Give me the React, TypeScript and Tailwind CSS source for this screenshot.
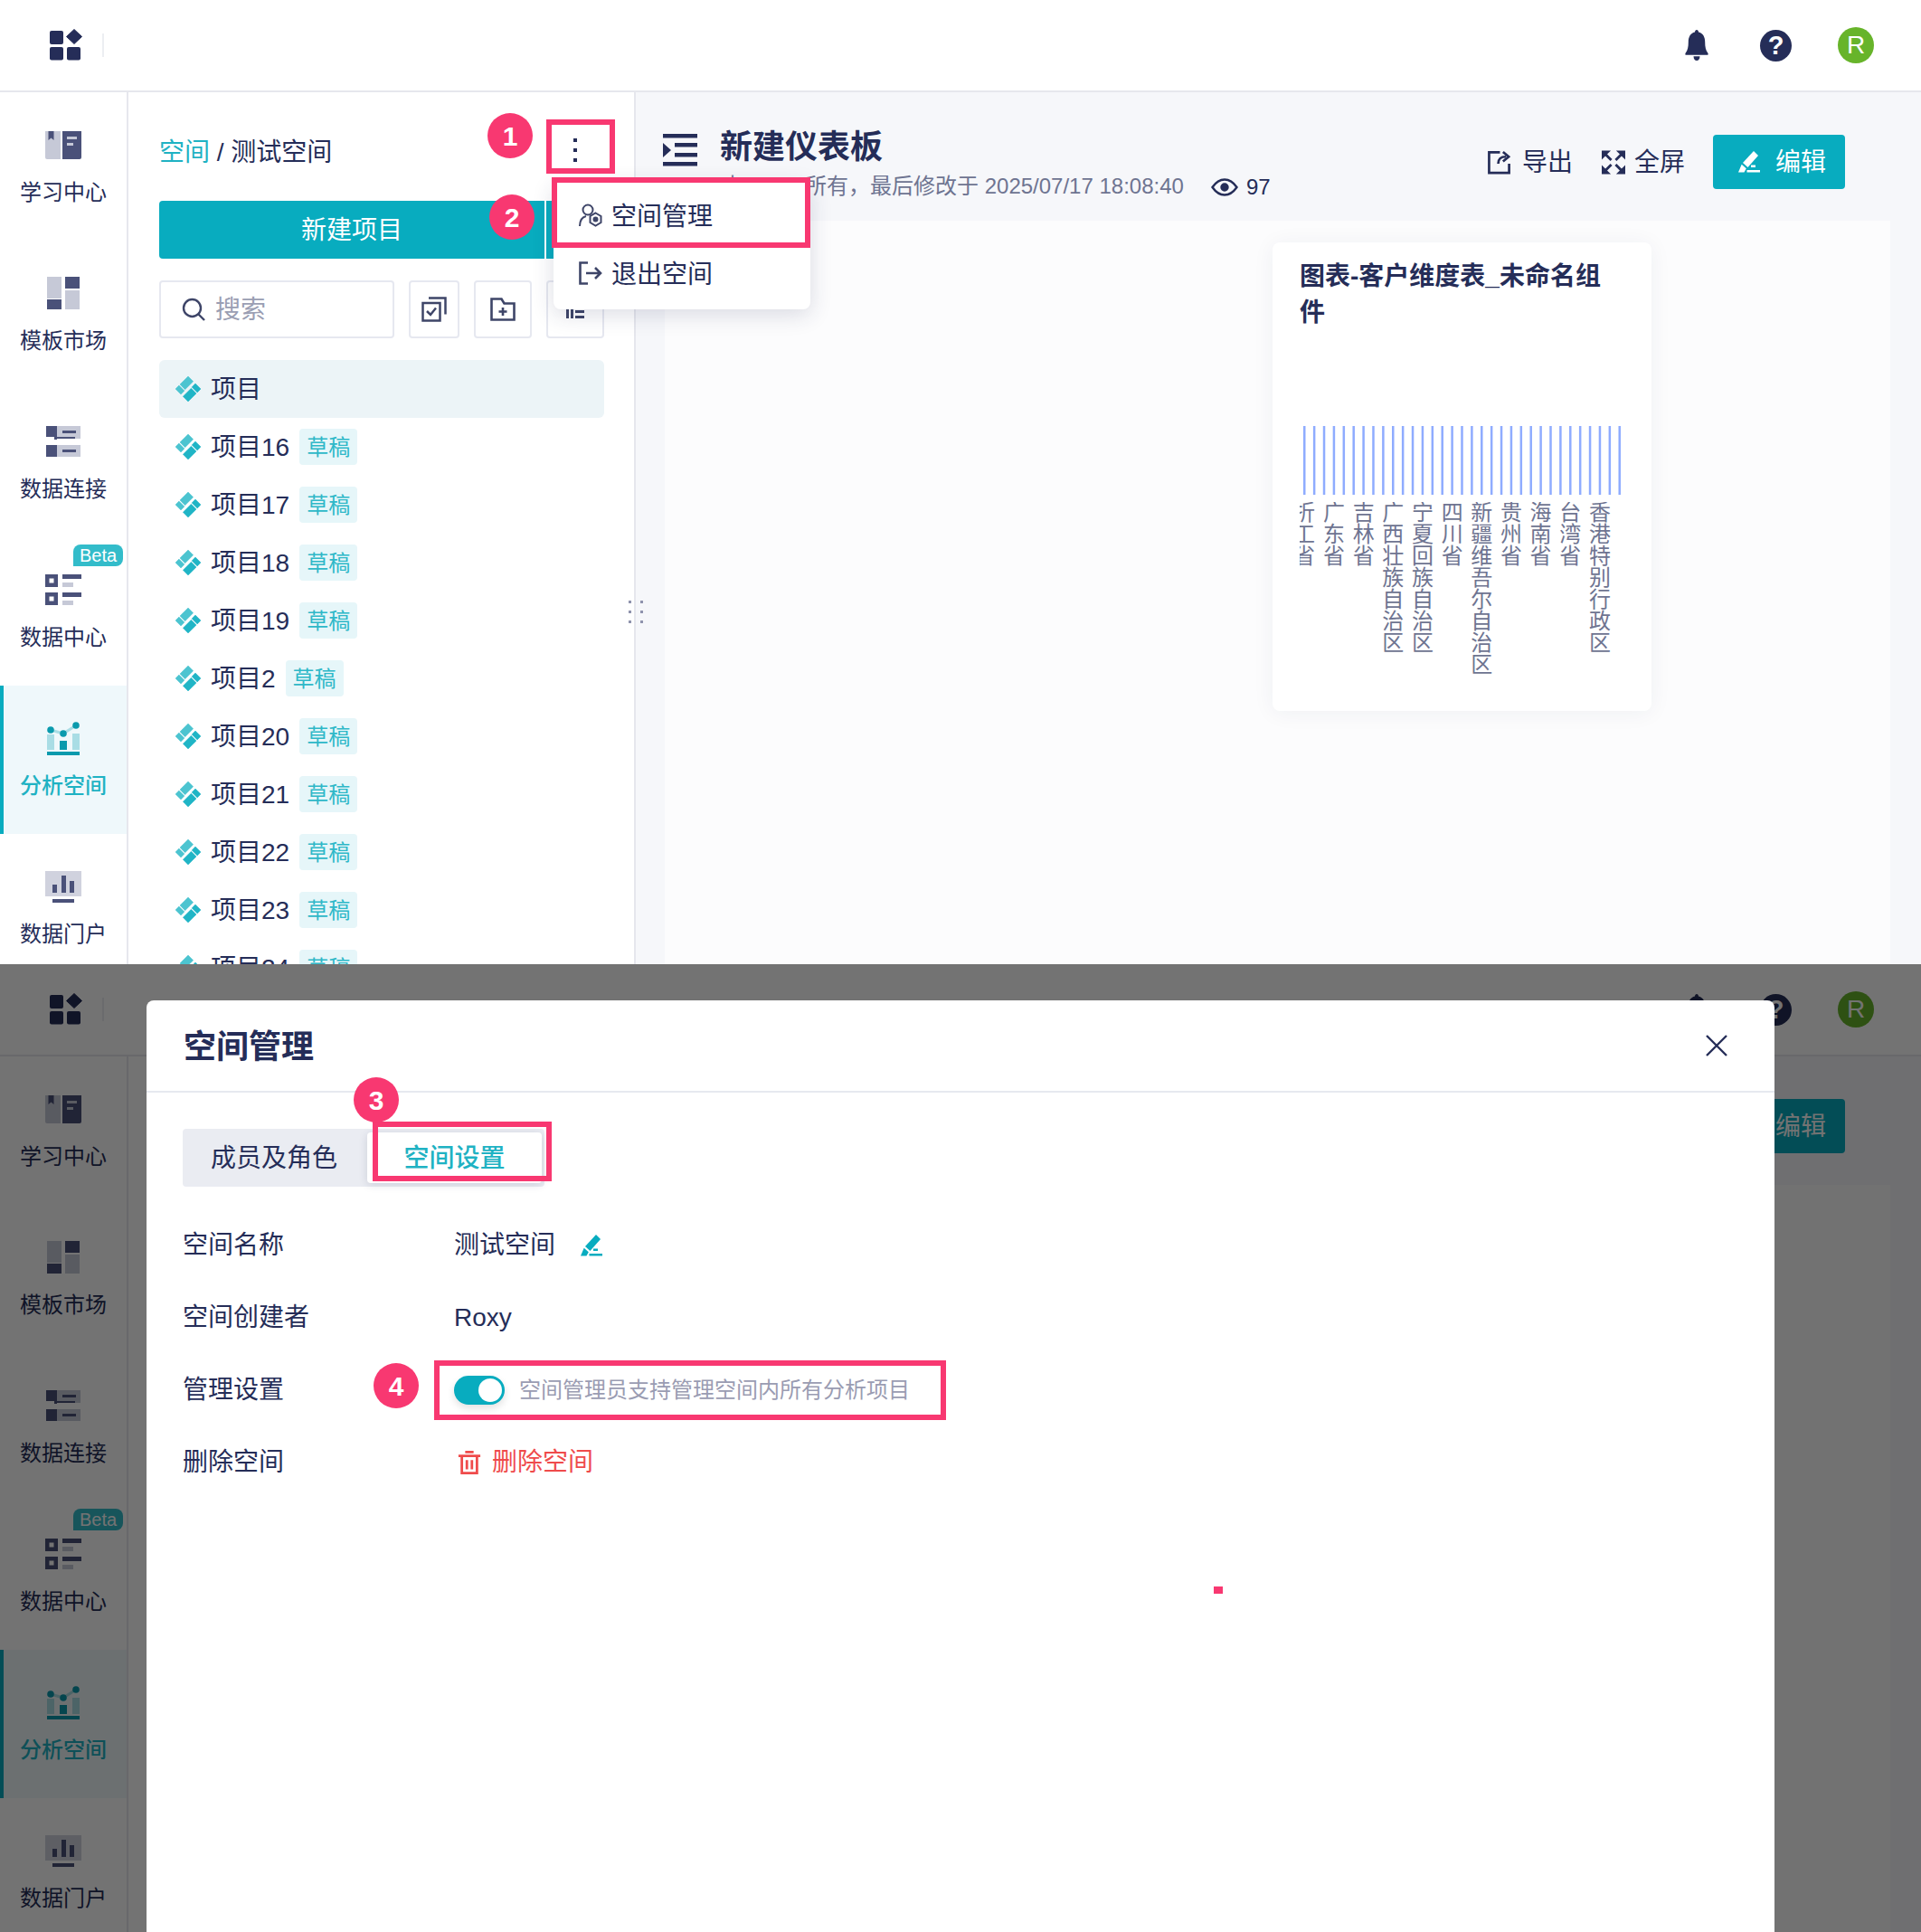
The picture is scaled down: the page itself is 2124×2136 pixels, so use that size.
import React from "react";

const FONT = "font-['Liberation_Sans','Noto_Sans_CJK_SC',sans-serif]";
const NAVY = "#252d58";

function Logo() {
  return (
    <svg width="38" height="36" viewBox="0 0 38 36">
      <rect x="1" y="2" width="15" height="15" rx="2" fill={NAVY} />
      <path d="M28 0.500 L36.500 8.500 L28 16.500 L19.500 8.500 Z" fill={NAVY} stroke={NAVY} strokeLinejoin="round" strokeWidth="1" />
      <rect x="1" y="20" width="15" height="14.500" rx="2" fill={NAVY} />
      <rect x="20" y="20" width="15" height="14.500" rx="2" fill={NAVY} />
    </svg>
  );
}

function Bell() {
  return (
    <svg width="28" height="34" viewBox="0 0 32 36" preserveAspectRatio="none">
      <path d="M16 0c1.400 0 2.200 1 2.300 2.600C24 3.800 26.500 8.500 26.500 14c0 6 1 10 3.500 13 1 1.300.5 2.500-1 2.500H3c-1.500 0-2-1.200-1-2.500 2.500-3 3.500-7 3.500-13 0-5.500 2.500-10.200 8.200-11.400C13.800 1 14.600 0 16 0z" fill={NAVY} />
      <path d="M12 31h8c0 3-1.800 5-4 5s-4-2-4-5z" fill={NAVY} />
    </svg>
  );
}

function Help() {
  return (
    <div className="w-[35px] h-[35px] rounded-full bg-[#252d58] flex items-center justify-center text-white text-[29px] font-bold leading-none">?</div>
  );
}

function BookIcon() {
  return (
    <svg width="40" height="32" viewBox="0 0 40 32">
      <path d="M0 1h17v31H2a2 2 0 0 1-2-2z" fill="#c6c9d7" />
      <path d="M3.500 1h6v10l-3-2.500-3 2.500z" fill="#4a5179" />
      <path d="M19 1h21v29a2 2 0 0 1-2 2H19z" fill="#4a5179" />
      <rect x="24" y="7" width="11" height="3" fill="#c6c9d7" />
      <rect x="24" y="14" width="7" height="3" fill="#c6c9d7" />
    </svg>
  );
}

function TemplateIcon() {
  return (
    <svg width="36" height="36" viewBox="0 0 36 36">
      <rect x="0" y="0" width="16" height="24" fill="#c6c9d7" />
      <rect x="20" y="0" width="16" height="13" fill="#4a5179" />
      <rect x="0" y="25" width="16" height="11" fill="#4a5179" />
      <rect x="20" y="15" width="16" height="21" fill="#c6c9d7" />
    </svg>
  );
}

function ConnectIcon() {
  return (
    <svg width="38" height="34" viewBox="0 0 38 34">
      <rect x="12" y="0" width="26" height="14" fill="#c6c9d7" />
      <rect x="0" y="21" width="38" height="13" fill="#c6c9d7" />
      <path d="M0 0h12v12h20v7H22v-4H9v-3H0z" fill="#4a5179" />
      <rect x="12" y="14" width="20" height="5" fill="#fff" />
      <rect x="0" y="21" width="12" height="13" fill="#4a5179" />
      <rect x="18" y="5" width="15" height="3" fill="#4a5179" />
      <rect x="18" y="26" width="15" height="3" fill="#4a5179" />
    </svg>
  );
}

function DataCenterIcon() {
  return (
    <svg width="40" height="34" viewBox="0 0 40 34">
      <path fillRule="evenodd" d="M0 0h14v14H0zM4.500 4.500v5h5v-5z" fill="#4a5179" />
      <path fillRule="evenodd" d="M0 20h14v14H0zM4.500 24.500v5h5v-5z" fill="#4a5179" />
      <rect x="19" y="0" width="21" height="5" fill="#4a5179" />
      <rect x="19" y="9" width="12" height="5" fill="#c6c9d7" />
      <rect x="19" y="20" width="21" height="5" fill="#4a5179" />
      <rect x="19" y="29" width="12" height="5" fill="#c6c9d7" />
    </svg>
  );
}

function AnalysisIcon() {
  return (
    <svg width="38" height="37" viewBox="0 0 38 37">
      <rect x="1" y="14" width="8" height="17" fill="#a9dde5" />
      <rect x="15" y="21" width="8" height="10" fill="#0a9aad" />
      <rect x="29" y="13" width="8" height="18" fill="#a9dde5" />
      <path d="M5 9 L19 13 L33 4" stroke="#a9dde5" strokeWidth="3" fill="none" />
      <circle cx="5" cy="9" r="3.800" fill="#0a9aad" />
      <circle cx="19" cy="13" r="3.800" fill="#0a9aad" />
      <circle cx="33" cy="4" r="3.800" fill="#0a9aad" />
      <rect x="1" y="33" width="36" height="4" fill="#0a9aad" />
    </svg>
  );
}

function PortalIcon() {
  return (
    <svg width="40" height="35" viewBox="0 0 40 35">
      <rect x="0" y="0" width="40" height="28" fill="#d0d2de" />
      <rect x="8" y="15" width="5" height="9" fill="#4a5179" />
      <rect x="18" y="5" width="5" height="19" fill="#4a5179" />
      <rect x="27" y="11" width="5" height="13" fill="#4a5179" />
      <rect x="8" y="31" width="24" height="4" fill="#4a5179" />
    </svg>
  );
}

function Dia() {
  return (
    <svg width="28" height="28" viewBox="0 0 28 28" className="shrink-0" strokeLinejoin="round" strokeWidth="0.500">
      <path d="M4.950 9.050 L14 0 L19.660 5.660 L10.600 14.700 Z" fill="#4cc4d0" stroke="#4cc4d0" />
      <path d="M0 14 L3.900 10.100 L9.900 16.100 L6 20 Z" fill="#4cc4d0" stroke="#4cc4d0" />
      <path d="M23.050 18.950 L14 28 L8.340 22.340 L17.400 13.300 Z" fill="#20b5c6" stroke="#20b5c6" />
      <path d="M28 14 L24.100 17.900 L18.100 11.900 L22 8 Z" fill="#20b5c6" stroke="#20b5c6" />
    </svg>
  );
}

function PenIcon({ color, w = 24 }: { color: string; w?: number }) {
  return (
    <svg width={w} height={w} viewBox="0 0 24 24">
      <path d="M17 0 L22 5 L10.500 18 L5 13 Z" fill={color} />
      <path d="M3.700 14.700 L8.800 19.300 L6.500 23.500 H0 Z" fill={color} />
      <rect x="14" y="15.500" width="5" height="2.500" fill={color} />
      <rect x="9.500" y="21" width="14.500" height="2.500" fill={color} />
    </svg>
  );
}

function NavItem({ icon, label, active, beta }: { icon: React.ReactNode; label: string; active?: boolean; beta?: boolean }) {
  return (
    <div className={active ? "relative h-[164px] flex flex-col items-center pt-[38px] bg-[#eff8fb] border-l-4 border-[#08acbf] pr-1" : "relative h-[164px] flex flex-col items-center pt-[38px]"}>
      {beta && (
        <div className="absolute left-[81px] top-[8px] w-[55px] h-6 rounded-lg rounded-bl-none bg-[#33bcca] text-white text-[20px] leading-6 text-center">Beta</div>
      )}
      <div className="h-10 flex items-center justify-center">{icon}</div>
      <div className={active ? "mt-[15px] text-[24px] leading-9 font-medium text-[#1fb2c3]" : "mt-[15px] text-[24px] leading-9 text-[#252d58]"}>{label}</div>
    </div>
  );
}

function Row({ label, draft = true, active }: { label: string; draft?: boolean; active?: boolean }) {
  return (
    <div className={active ? "h-16 shrink-0 flex items-center pl-[18px] rounded-md bg-[#ecf4f7]" : "h-16 shrink-0 flex items-center pl-[18px]"}>
      <Dia />
      <span className="ml-[11px] pt-0.5 text-[28px] leading-10 text-[#252d58]">{label}</span>
      {draft && <span className="ml-[11px] w-16 h-10 rounded bg-[#e6f6f9] text-[#2eb8c8] text-[24px] leading-[42px] text-center">草稿</span>}
    </div>
  );
}

const LABELS = ["折工省", "广东省", "吉林省", "广西壮族自治区", "宁夏回族自治区", "四川省", "新疆维吾尔自治区", "贵州省", "海南省", "台湾省", "香港特别行政区"];

function Bars() {
  const xs = Array.from({ length: 33 }, (_, i) => 1.25 + i * 10.89);
  return (
    <svg width="354" height="76" viewBox="0 0 354 76" className="block">
      {xs.map((x) => (
        <rect key={x} x={x - 1.25} y="0" width="2.500" height="76" fill="#8facff" />
      ))}
    </svg>
  );
}

function Screen({ dim }: { dim?: boolean }) {
  return (
    <div className={dim ? "relative h-[1070px] overflow-hidden bg-white" : "relative h-[1066px] overflow-hidden bg-white"}>
      <header className="h-[102px] border-b-2 border-[#e6e7ed] flex items-center justify-between pl-[54px] pr-[52px]">
        <div className="flex items-center">
          <Logo />
          <div className="ml-[21px] w-0.5 h-[26px] bg-[#eceef2]" />
        </div>
        <div className="flex items-center">
          <Bell />
          <div className="ml-[56px]"><Help /></div>
          <div className="ml-[51px] w-10 h-10 rounded-full bg-[#67b42a] flex items-center justify-center text-white text-[28px]">R</div>
        </div>
      </header>
      <div className="flex">
        <aside className="w-[142px] shrink-0 border-r-2 border-[#e6e7ed]">
          <NavItem icon={<BookIcon />} label="学习中心" />
          <NavItem icon={<TemplateIcon />} label="模板市场" />
          <NavItem icon={<ConnectIcon />} label="数据连接" />
          <NavItem icon={<DataCenterIcon />} label="数据中心" beta />
          <NavItem icon={<AnalysisIcon />} label="分析空间" active />
          <NavItem icon={<PortalIcon />} label="数据门户" />
        </aside>
        <section className="relative w-[561px] shrink-0 h-[1000px] border-r-2 border-[#e6e7ed] pl-[34px] pr-[33px]">
          {!dim && (
            <>
              <div className="h-[120px] pt-2 flex items-center justify-between">
                <div className="pt-[5px] text-[28px] text-[#252d58] leading-10">
                  <span className="text-[#1fb2c3]">空间</span> / 测试空间
                </div>
                <div className="flex flex-col gap-[7px] mr-[30px]">
                  <span className="w-1 h-1 bg-[#252d58]" />
                  <span className="w-1 h-1 bg-[#252d58]" />
                  <span className="w-1 h-1 bg-[#252d58]" />
                </div>
              </div>
              <div className="flex gap-0.5">
                <button className="w-[426px] h-16 pt-0.5 rounded-l bg-[#08acbf] text-white text-[28px]">新建项目</button>
                <div className="flex-1 h-16 rounded-r bg-[#08acbf]" />
              </div>
              <div className="mt-6 flex">
                <div className="w-[260px] h-16 border-2 border-[#e6e8f0] rounded flex items-center pl-[22px]">
                  <svg width="28" height="28" viewBox="0 0 28 28" fill="none" stroke="#3e4568" strokeWidth="2.400">
                    <circle cx="12.500" cy="12.500" r="9.500" />
                    <path d="M19.500 19.500 L26 26" />
                  </svg>
                  <span className="ml-[10px] pt-0.5 text-[28px] text-[#9a9eb3]">搜索</span>
                </div>
                <div className="ml-4 w-[56px] h-16 border-2 border-[#e6e8f0] rounded flex items-center justify-center">
                  <svg width="28" height="28" viewBox="0 0 28 28" fill="none" stroke="#3e4568" strokeWidth="2.500">
                    <rect x="1.500" y="7" width="19" height="19.500" />
                    <path d="M8 1.500h18.500v18" />
                    <path d="M6 16l4 4 6-7.500" />
                  </svg>
                </div>
                <div className="ml-4 w-16 h-16 border-2 border-[#e6e8f0] rounded flex items-center justify-center">
                  <svg width="28" height="26" viewBox="0 0 28 26" fill="none" stroke="#3e4568" strokeWidth="2.600">
                    <path d="M1.500 1.500h11l3 5h11v18h-25z" />
                    <path d="M14 11v9M9.500 15.500h9" />
                  </svg>
                </div>
                <div className="ml-4 w-16 h-16 border-2 border-[#e6e8f0] rounded flex items-center justify-center">
                  <svg width="20" height="20" viewBox="0 0 20 20" fill="#3e4568">
                    <rect x="0" y="8" width="3" height="12" />
                    <rect x="5" y="0" width="3" height="20" />
                    <rect x="10" y="11" width="10" height="3" />
                    <rect x="10" y="17" width="10" height="3" />
                  </svg>
                </div>
              </div>
              <div className="mt-6 flex flex-col">
                <Row label="项目" draft={false} active />
                <Row label="项目16" />
                <Row label="项目17" />
                <Row label="项目18" />
                <Row label="项目19" />
                <Row label="项目2" />
                <Row label="项目20" />
                <Row label="项目21" />
                <Row label="项目22" />
                <Row label="项目23" />
                <Row label="项目24" />
              </div>
              <div className="absolute right-[-10px] top-[562px] grid grid-cols-2 gap-x-[10px] gap-y-2">
                {[0, 1, 2, 3, 4, 5].map((i) => (
                  <span key={i} className="w-[3px] h-[3px] bg-[#8f93ad]" />
                ))}
              </div>
            </>
          )}
        </section>
        <main className="flex-1 min-w-0 bg-[#f6f7fa] h-[1000px] pl-[32px] pr-[34px]">
          <div className="h-[142px] flex items-center">
            {!dim && (
              <>
                <svg width="38" height="36" viewBox="0 0 38 36" className="mt-[-15px] ml-[-2px]" fill={NAVY}>
                  <rect x="0" y="0" width="38" height="4.500" />
                  <rect x="13" y="10" width="25" height="4.500" />
                  <rect x="13" y="21" width="25" height="4.500" />
                  <rect x="0" y="31" width="38" height="4.500" />
                  <path d="M0 10 L9 18 L0 26 Z" />
                </svg>
                <div className="ml-[25px] mt-[14px]">
                  <div className="mt-[2px] text-[36px] leading-[46px] font-semibold text-[#252d58]">新建仪表板</div>
                  <div className="mt-1 flex items-center text-[24px] leading-8 text-[#6e7491]">
                    <span className="ml-[2px]">由 Roxy 所有，最后修改于 2025/07/17 18:08:40</span>
                    <svg width="30" height="20" viewBox="0 0 30 20" className="ml-[30px] mt-px" fill="none" stroke="#252d58" strokeWidth="2.400">
                      <path d="M1.500 10C6 3.500 10 1.500 15 1.500s9 2 13.500 8.500C24 16.500 20 18.500 15 18.500S6 16.500 1.500 10z" />
                      <circle cx="15" cy="10" r="3.500" fill="#252d58" />
                    </svg>
                    <span className="ml-[9px] mt-px text-[#252d58]">97</span>
                  </div>
                </div>
              </>
            )}
            <div className="ml-auto mr-[50px] flex items-center text-[28px] text-[#252d58] mt-[12px]">
              <svg width="26" height="27" viewBox="0 0 27 27" fill="none" stroke={NAVY} strokeWidth="2.800">
                <path d="M14 2H1.500v23.500h23V15" />
                <path d="M12 15c0-6 3-8 9-8" />
                <path d="M17.500 1.500L24 7l-6.500 5.500" />
              </svg>
              <span className="ml-3 pt-0.5">导出</span>
              <svg width="26" height="27" viewBox="0 0 27 27" className="ml-[32px]" fill={NAVY} stroke={NAVY}>
                <path d="M0 0h10.500L0 10.500z" strokeWidth="0" />
                <path d="M27 0H16.500L27 10.500z" strokeWidth="0" />
                <path d="M0 27h10.500L0 16.500z" strokeWidth="0" />
                <path d="M27 27H16.500L27 16.500z" strokeWidth="0" />
                <path d="M4 4L11 11M23 4L16 11M4 23L11 16M23 23L16 16" strokeWidth="3" fill="none" />
              </svg>
              <span className="ml-[10px] pt-0.5">全屏</span>
              <button className="ml-[31px] w-[146px] h-[60px] rounded bg-[#08acbf] text-white flex items-center pl-7">
                <PenIcon color="#ffffff" />
                <span className="ml-[17px] pt-0.5">编辑</span>
              </button>
            </div>
          </div>
          <div className="h-[900px] bg-[#fcfcfd] pt-6">
            {!dim && (
              <div className="ml-[672px] w-[419px] h-[518px] rounded-lg bg-white shadow-[0_2px_24px_rgba(37,45,88,0.06)] relative">
                <div className="pt-[18px] pl-[30px] pr-[30px] text-[28px] leading-10 font-semibold text-[#252d58] w-[395px]">图表-客户维度表_未命名组件</div>
                <div className="mt-[105px] ml-[34px]"><Bars /></div>
                <div className="mt-2 ml-[30px] w-[360px] flex overflow-hidden">
                  {LABELS.map((l, i) => (
                    <div key={l} className={i === 0 ? "w-[21.700px] shrink-0 overflow-hidden" : "w-[32.660px] shrink-0 flex justify-center"}>
                      <div className={i === 0 ? "w-6 ml-[-7px] text-[24px] leading-6 text-center text-[#6e7491] break-all" : "w-6 text-[24px] leading-6 text-center text-[#6e7491] break-all"}>{l}</div>
                    </div>
                  ))}
                </div>
              </div>
            )}
          </div>
        </main>
      </div>
      {dim && <div className="absolute inset-0 bg-black/55" />}
    </div>
  );
}

function Badge({ n, pos }: { n: number; pos: string }) {
  return (
    <div className={"absolute w-[50px] h-[50px] rounded-full bg-[#f83871] text-white text-[30px] font-bold flex items-center justify-center " + pos}>{n}</div>
  );
}

function Menu() {
  return (
    <div className="absolute left-[612px] top-[200px] w-[284px] h-[142px] rounded-lg bg-white shadow-[0_6px_24px_rgba(37,45,88,0.16)] text-[28px] text-[#252d58]">
      <div className="h-[76px] flex items-center pl-7">
        <svg width="26" height="26" viewBox="0 0 26 26" fill="none" stroke="#3e4568" strokeWidth="2">
          <circle cx="10" cy="7" r="5.500" />
          <path d="M1 25c0-6 3-10 7-11" />
          <path d="M18.500 10.500l6 3.500v7l-6 3.500-6-3.500v-7z" />
          <circle cx="18.500" cy="17.500" r="2" fill="#3e4568" />
        </svg>
        <span className="ml-[10px] pt-1">空间管理</span>
      </div>
      <div className="h-[52px] flex items-center pl-7">
        <svg width="26" height="26" viewBox="0 0 26 26" fill="none" stroke="#3e4568" strokeWidth="2.600">
          <path d="M10 1.500H1.500v23H10" />
          <path d="M8 13h16M18 7l6 6-6 6" />
        </svg>
        <span className="ml-[10px] pt-1">退出空间</span>
      </div>
    </div>
  );
}

function SettingRow({ label, children }: { label: string; children: React.ReactNode }) {
  return (
    <div className="h-20 pt-0.5 flex items-center text-[28px] text-[#252d58]">
      <div className="w-[300px] shrink-0">{label}</div>
      <div className="flex items-center">{children}</div>
    </div>
  );
}

function Modal() {
  return (
    <div className="absolute left-[162px] top-[1106px] w-[1800px] h-[1030px] rounded-t-lg bg-white">
      <div className="h-[102px] border-b-2 border-[#e6e9ef] flex items-center justify-between pl-[41px] pr-[52px]">
        <div className="pt-1 text-[36px] font-semibold text-[#252d58]">空间管理</div>
        <svg width="24" height="24" viewBox="0 0 24 24" stroke="#252d58" strokeWidth="2.400">
          <path d="M1 1 L23 23 M23 1 L1 23" />
        </svg>
      </div>
      <div className="pl-10">
        <div className="mt-10 w-[400px] h-16 rounded bg-[#eaecf2] flex items-center pl-[31px] pr-[3px]">
          <span className="pt-0.5 text-[28px] text-[#252d58]">成员及角色</span>
          <div className="ml-auto w-[193px] h-14 pt-0.5 rounded bg-white shadow-[0_2px_10px_rgba(37,45,88,0.15)] flex items-center justify-center text-[28px] font-medium text-[#1fb2c3]">空间设置</div>
        </div>
        <div className="mt-6">
          <SettingRow label="空间名称">
            <span>测试空间</span>
            <span className="ml-7"><PenIcon color="#08acbf" /></span>
          </SettingRow>
          <SettingRow label="空间创建者">
            <span>Roxy</span>
          </SettingRow>
          <SettingRow label="管理设置">
            <div className="w-14 h-8 rounded-full bg-[#08acbf] relative shadow-[0_4px_8px_rgba(0,0,0,0.12)]">
              <div className="absolute right-[3px] top-[3px] w-[26px] h-[26px] rounded-full bg-white" />
            </div>
            <span className="ml-4 text-[24px] text-[#9a9cb2]">空间管理员支持管理空间内所有分析项目</span>
          </SettingRow>
          <SettingRow label="删除空间">
            <svg width="26" height="26" viewBox="0 0 26 28" className="ml-1" fill="none" stroke="#ef4b4b" strokeWidth="3">
              <path d="M0 6h26M8 1.500h10" />
              <path d="M4 7v19.500h18V7" />
              <path d="M10 11v11M16 11v11" />
            </svg>
            <span className="ml-3 text-[#ef4b4b]">删除空间</span>
          </SettingRow>
        </div>
      </div>
    </div>
  );
}

export default function App() {
  return (
    <div className={"relative w-[2124px] h-[2136px] overflow-hidden " + FONT}>
      <Screen />
      <Screen dim />
      <Menu />
      <Modal />
      <div className="absolute left-[604px] top-[132px] w-[76px] h-[60px] border-[6px] border-[#f83871]" />
      <div className="absolute left-[610px] top-[196px] w-[286px] h-[78px] border-[6px] border-[#f83871]" />
      <div className="absolute left-[412px] top-[1240px] w-[198px] h-[66px] border-[6px] border-[#f83871]" />
      <div className="absolute left-[480px] top-[1504px] w-[566px] h-[66px] border-[6px] border-[#f83871]" />
      <Badge n={1} pos="left-[539px] top-[125px]" />
      <Badge n={2} pos="left-[541px] top-[215px]" />
      <Badge n={3} pos="left-[391px] top-[1191px]" />
      <Badge n={4} pos="left-[413px] top-[1507px]" />
      <div className="absolute left-[1342px] top-[1754px] w-[10px] h-2 bg-[#f83871]" />
    </div>
  );
}
